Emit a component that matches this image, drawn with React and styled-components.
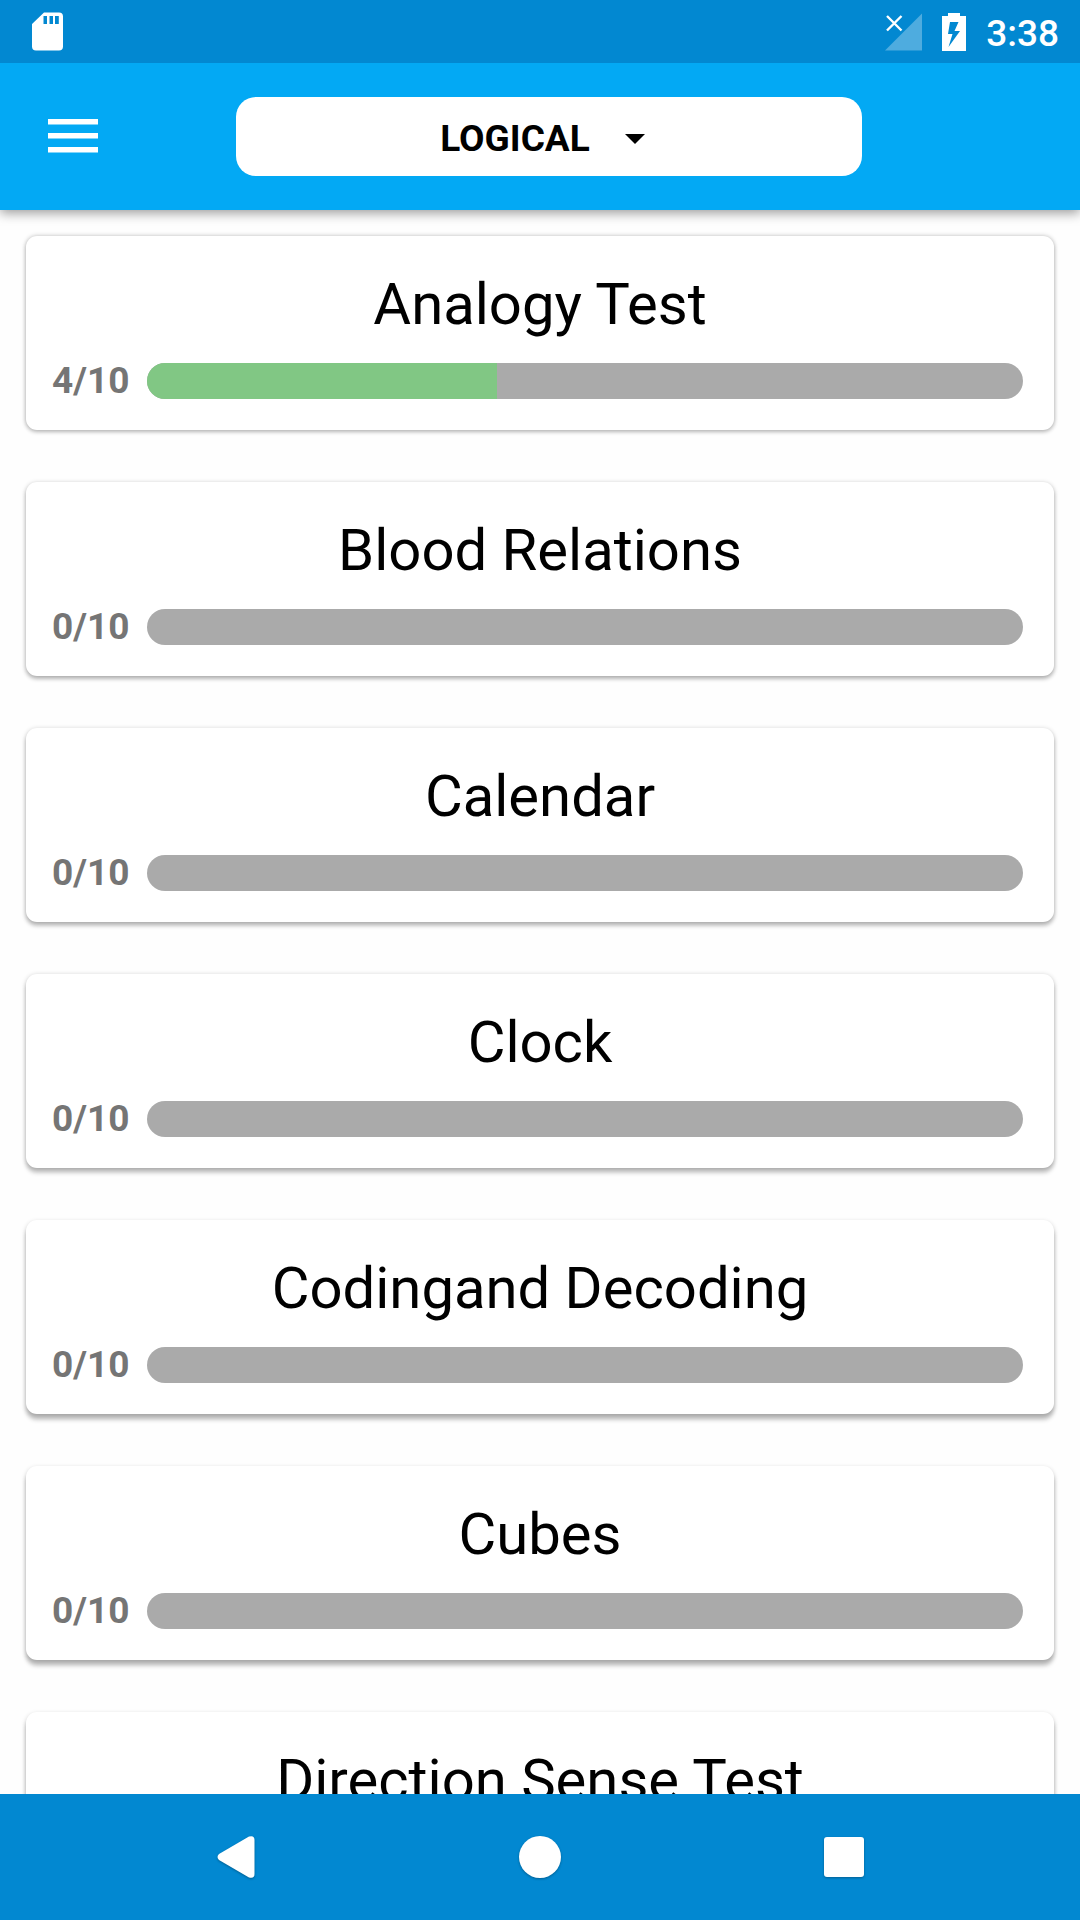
import React, { useState } from 'react';
import styled, { createGlobalStyle } from 'styled-components';

const GlobalStyle = createGlobalStyle`
  * {
    box-sizing: border-box;
  }
  body {
    margin: 0;
    background: #fefefe;
    font-family: Roboto, "Liberation Sans", sans-serif;
  }
`;

const Screen = styled.div`
  display: flex;
  flex-direction: column;
  height: 100vh;
`;

const StatusBar = styled.div`
  position: relative;
  display: flex;
  flex: none;
  align-items: center;
  height: 63px;
  padding: 0 21px 0 32px;
  background: #0288d1;
  color: #fff;
  z-index: 2;
  svg {
    display: block;
  }
`;

const StatusIcons = styled.div`
  display: flex;
  align-items: center;
  gap: 20px;
  margin-left: auto;
`;

const Time = styled.time`
  font-size: 37px;
  font-weight: 500;
  line-height: 44px;
  padding-top: 5px;
`;

const AppBar = styled.header`
  position: relative;
  display: flex;
  flex: none;
  align-items: center;
  height: 147px;
  padding: 0 218px 0 42px;
  background: #03a9f4;
  box-shadow: 0 3px 11px rgba(0, 0, 0, 0.4);
  z-index: 1;
`;

const MenuButton = styled.button`
  display: flex;
  flex: none;
  align-items: center;
  width: 194px;
  height: 72px;
  padding: 0 6px 2px;
  border: 0;
  background: none;
  cursor: pointer;
`;

const Picker = styled.div`
  position: relative;
  flex: 1;
  min-width: 0;
`;

const PickerSelect = styled.select`
  appearance: none;
  display: block;
  width: 100%;
  height: 79px;
  padding: 4px 68px 0 0;
  border: 0;
  border-radius: 20px;
  background: #fff;
  color: #000;
  font-family: inherit;
  font-size: 37px;
  font-weight: 700;
  text-align: center;
  text-align-last: center;
  cursor: pointer;
`;

const Caret = styled.svg`
  position: absolute;
  top: 37px;
  left: calc(50% + 76px);
  pointer-events: none;
`;

const TopicList = styled.ul`
  display: flex;
  flex: 1;
  flex-direction: column;
  gap: 52px;
  min-height: 0;
  margin: 0;
  padding: 26px;
  list-style: none;
  overflow-y: auto;
  scrollbar-width: none;
`;

// the shadow drops further the lower the card sits on the screen
const Card = styled.li`
  flex: none;
  height: 194px;
  padding: 34px 31px 0 26px;
  border-radius: 11px;
  background: #fff;
  box-shadow:
    0 ${props => props.$drop}px 4px rgba(0, 0, 0, 0.2),
    0 ${props => Math.floor(props.$drop / 3)}px 5px rgba(0, 0, 0, 0.22);
`;

const CardTitle = styled.h2`
  margin: 0 -5px 25px 0;
  color: #000;
  font-size: 58px;
  font-weight: 400;
  line-height: 68px;
  text-align: center;
`;

const ProgressRow = styled.div`
  display: flex;
  align-items: center;
  height: 36px;
`;

const Count = styled.span`
  flex: none;
  width: 95px;
  color: #757575;
  font-size: 37px;
  font-weight: 700;
  line-height: 36px;
`;

const Track = styled.div`
  flex: 1;
  height: 36px;
  border-radius: 18px;
  background: #aaa;
  overflow: hidden;
`;

const Fill = styled.div`
  height: 100%;
  background: #81c784;
`;

const NavBar = styled.nav`
  display: grid;
  flex: none;
  grid-template-columns: repeat(3, minmax(0, 304px));
  justify-content: center;
  height: 126px;
  background: #0288d1;
`;

const NavButton = styled.button`
  display: flex;
  align-items: center;
  justify-content: center;
  padding: 0;
  border: 0;
  background: none;
  cursor: pointer;
  svg {
    filter: drop-shadow(0 1px 1px rgba(0, 0, 0, 0.3));
  }
`;

const categories = ['LOGICAL', 'VERBAL', 'NUMERICAL'];

const topics = [
  { name: 'Analogy Test', done: 4, total: 10 },
  { name: 'Blood Relations', done: 0, total: 10 },
  { name: 'Calendar', done: 0, total: 10 },
  { name: 'Clock', done: 0, total: 10 },
  { name: 'Codingand Decoding', done: 0, total: 10 },
  { name: 'Cubes', done: 0, total: 10 },
  { name: 'Direction Sense Test', done: 0, total: 10 },
];

const SdCardIcon = () => (
  <svg width="31" height="39" viewBox="0 0 31 39" fill="#fff">
    <path
      fillRule="evenodd"
      d="M12 0.5H27Q31 0.5 31 4.5V34.5Q31 38.5 27 38.5H4Q0 38.5 0 34.5V12ZM11.500 4V12H15V4ZM17.500 4V12H21V4ZM23 4V12H26.800V4Z"
    />
  </svg>
);

const SignalIcon = () => (
  <svg width="37" height="38" viewBox="0 0 37 38">
    <path d="M37 0.500V37.500H0Z" fill="#fff" fillOpacity="0.3" />
    <path d="M2 3L16.500 17.500M16.500 3L2 17.500" stroke="#fff" strokeWidth="2.400" />
  </svg>
);

const BatteryIcon = () => (
  <svg width="24" height="38" viewBox="0 0 24 38" fill="#fff">
    <path
      fillRule="evenodd"
      d="M6 0H18V3H24V38H0V3H6ZM8 9L6 21H10.500L6.500 34L18 18H12.500L16.500 9Z"
    />
  </svg>
);

const Topic = ({ name, done, total, drop }) => (
  <Card $drop={drop}>
    <CardTitle>{name}</CardTitle>
    <ProgressRow>
      <Count>{done}/{total}</Count>
      <Track role="progressbar" aria-label={name} aria-valuenow={done} aria-valuemin={0} aria-valuemax={total}>
        <Fill style={{ width: `${(done / total) * 100}%` }} />
      </Track>
    </ProgressRow>
  </Card>
);

const App = () => {
  const [category, setCategory] = useState('LOGICAL');

  return (
    <Screen>
      <GlobalStyle />
      <StatusBar>
        <SdCardIcon />
        <StatusIcons>
          <SignalIcon />
          <BatteryIcon />
          <Time>3:38</Time>
        </StatusIcons>
      </StatusBar>

      <AppBar>
        <MenuButton aria-label="Open menu">
          <svg width="50" height="34" viewBox="0 0 50 34" fill="#fff">
            <path d="M0 0H50V5.500H0ZM0 14H50V19.500H0ZM0 28H50V33.500H0Z" />
          </svg>
        </MenuButton>
        <Picker>
          <PickerSelect aria-label="Category" value={category} onChange={e => setCategory(e.target.value)}>
            {categories.map(c => <option key={c}>{c}</option>)}
          </PickerSelect>
          <Caret width="20" height="10" viewBox="0 0 20 10">
            <path d="M0 0H20L10 10Z" />
          </Caret>
        </Picker>
      </AppBar>

      <TopicList>
        {topics.map((topic, i) => (
          <Topic key={topic.name} {...topic} drop={Math.min(2 + i, 6)} />
        ))}
      </TopicList>

      <NavBar>
        <NavButton aria-label="Back">
          <svg width="38" height="42" viewBox="0 0 38 42" fill="#fff">
            <path d="M2 18L32 0.600Q37.500 -1 37.500 4V38Q37.500 43 32 41.400L2 24Q-1 21 2 18Z" />
          </svg>
        </NavButton>
        <NavButton aria-label="Home">
          <svg width="42" height="42" viewBox="0 0 42 42" fill="#fff">
            <circle cx="21" cy="21" r="21" />
          </svg>
        </NavButton>
        <NavButton aria-label="Recent apps">
          <svg width="40" height="40" viewBox="0 0 40 40" fill="#fff">
            <rect width="40" height="40" rx="3" />
          </svg>
        </NavButton>
      </NavBar>
    </Screen>
  );
};

export default App;
